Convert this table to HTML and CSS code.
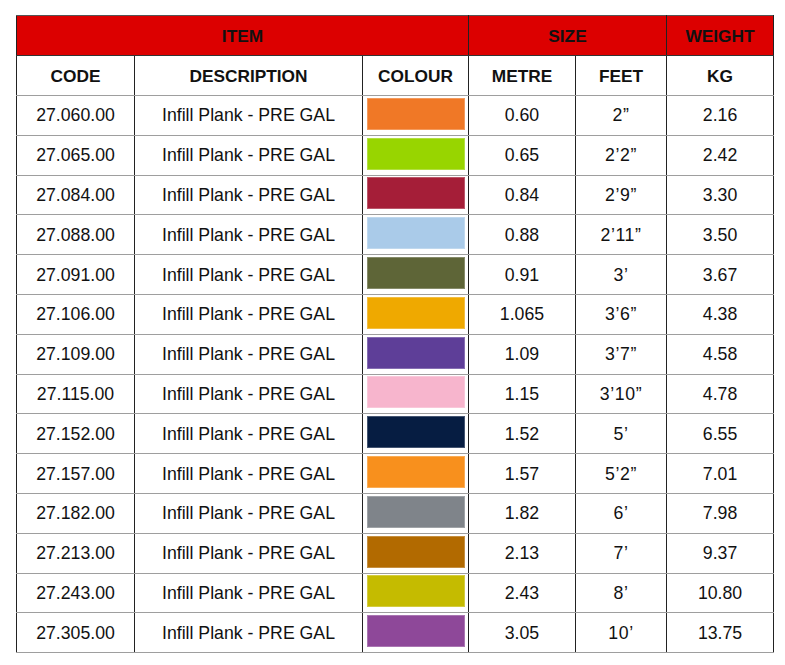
FILE: index.html
```html
<!DOCTYPE html>
<html>
<head>
<meta charset="utf-8">
<link rel="stylesheet" href="styles.css">
</head>
<body>
<table class="spec">
  <colgroup>
    <col class="c-code"><col class="c-desc"><col class="c-colour"><col class="c-metre"><col class="c-feet"><col class="c-kg">
  </colgroup>
  <thead>
    <tr class="group">
      <th colspan="3">ITEM</th>
      <th colspan="2">SIZE</th>
      <th>WEIGHT</th>
    </tr>
    <tr class="sub">
      <th>CODE</th><th>DESCRIPTION</th><th>COLOUR</th><th>METRE</th><th>FEET</th><th>KG</th>
    </tr>
  </thead>
  <tbody>
    <tr><td>27.060.00</td><td>Infill Plank - PRE GAL</td><td class="sw"><div class="swatch" style="background:#f07826"></div></td><td>0.60</td><td class="ft">2”</td><td>2.16</td></tr>
    <tr><td>27.065.00</td><td>Infill Plank - PRE GAL</td><td class="sw"><div class="swatch" style="background:#98d500"></div></td><td>0.65</td><td class="ft">2’2”</td><td>2.42</td></tr>
    <tr><td>27.084.00</td><td>Infill Plank - PRE GAL</td><td class="sw"><div class="swatch" style="background:#a51e38"></div></td><td>0.84</td><td class="ft">2’9”</td><td>3.30</td></tr>
    <tr><td>27.088.00</td><td>Infill Plank - PRE GAL</td><td class="sw"><div class="swatch" style="background:#aacbe9"></div></td><td>0.88</td><td class="ft">2’11”</td><td>3.50</td></tr>
    <tr><td>27.091.00</td><td>Infill Plank - PRE GAL</td><td class="sw"><div class="swatch" style="background:#5e6537"></div></td><td>0.91</td><td class="ft">3’</td><td>3.67</td></tr>
    <tr><td>27.106.00</td><td>Infill Plank - PRE GAL</td><td class="sw"><div class="swatch" style="background:#efa900"></div></td><td>1.065</td><td class="ft">3’6”</td><td>4.38</td></tr>
    <tr><td>27.109.00</td><td>Infill Plank - PRE GAL</td><td class="sw"><div class="swatch" style="background:#5e3e98"></div></td><td>1.09</td><td class="ft">3’7”</td><td>4.58</td></tr>
    <tr><td>27.115.00</td><td>Infill Plank - PRE GAL</td><td class="sw"><div class="swatch" style="background:#f7b5cd"></div></td><td>1.15</td><td class="ft">3’10”</td><td>4.78</td></tr>
    <tr><td>27.152.00</td><td>Infill Plank - PRE GAL</td><td class="sw"><div class="swatch" style="background:#061d42"></div></td><td>1.52</td><td class="ft">5’</td><td>6.55</td></tr>
    <tr><td>27.157.00</td><td>Infill Plank - PRE GAL</td><td class="sw"><div class="swatch" style="background:#f8901d"></div></td><td>1.57</td><td class="ft">5’2”</td><td>7.01</td></tr>
    <tr><td>27.182.00</td><td>Infill Plank - PRE GAL</td><td class="sw"><div class="swatch" style="background:#7f848a"></div></td><td>1.82</td><td class="ft">6’</td><td>7.98</td></tr>
    <tr><td>27.213.00</td><td>Infill Plank - PRE GAL</td><td class="sw"><div class="swatch" style="background:#b26a00"></div></td><td>2.13</td><td class="ft">7’</td><td>9.37</td></tr>
    <tr><td>27.243.00</td><td>Infill Plank - PRE GAL</td><td class="sw"><div class="swatch" style="background:#c5bb00"></div></td><td>2.43</td><td class="ft">8’</td><td>10.80</td></tr>
    <tr><td>27.305.00</td><td>Infill Plank - PRE GAL</td><td class="sw"><div class="swatch" style="background:#8e4899"></div></td><td>3.05</td><td class="ft">10’</td><td>13.75</td></tr>
  </tbody>
</table>
</body>
</html>
```

FILE: styles.css
```css
html, body {
  margin: 0;
  padding: 0;
  background: #ffffff;
}
body {
  padding: 15px 0 0 16px;
  font-family: "Liberation Sans", Arial, sans-serif;
  color: #111111;
}
.spec {
  border-collapse: collapse;
  table-layout: fixed;
  width: 757px;
  border: 1px solid #555555;
}
.c-code { width: 118px; }
.c-desc { width: 228px; }
.c-colour { width: 106px; }
.c-metre { width: 107px; }
.c-feet { width: 91px; }
.c-kg { width: 107px; }

.spec th, .spec td {
  padding: 0;
  text-align: center;
  vertical-align: middle;
  border-left: 1px solid #222222;
  border-right: 1px solid #222222;
  border-top: 1px solid #9e9e9e;
  border-bottom: 1px solid #9e9e9e;
  white-space: nowrap;
  line-height: 20px;
}
.spec thead tr {
  height: 40px;
}
.spec tbody tr {
  height: 39.8px;
}
.spec th {
  font-weight: bold;
  font-size: 17.3px;
}
.group th {
  background: #dc0000;
  color: #111111;
  border-bottom: 1px solid #333333;
  border-top: 1px solid #555555;
}
.spec td {
  font-size: 17.7px;
}
.spec td.ft {
  letter-spacing: 0.6px;
}
.spec td.sw {
  padding: 1px 3px 4px 4px;
}
.swatch {
  height: 32px;
  box-shadow: inset 0 0 0 1px rgba(255, 255, 255, 0.25);
}
```
